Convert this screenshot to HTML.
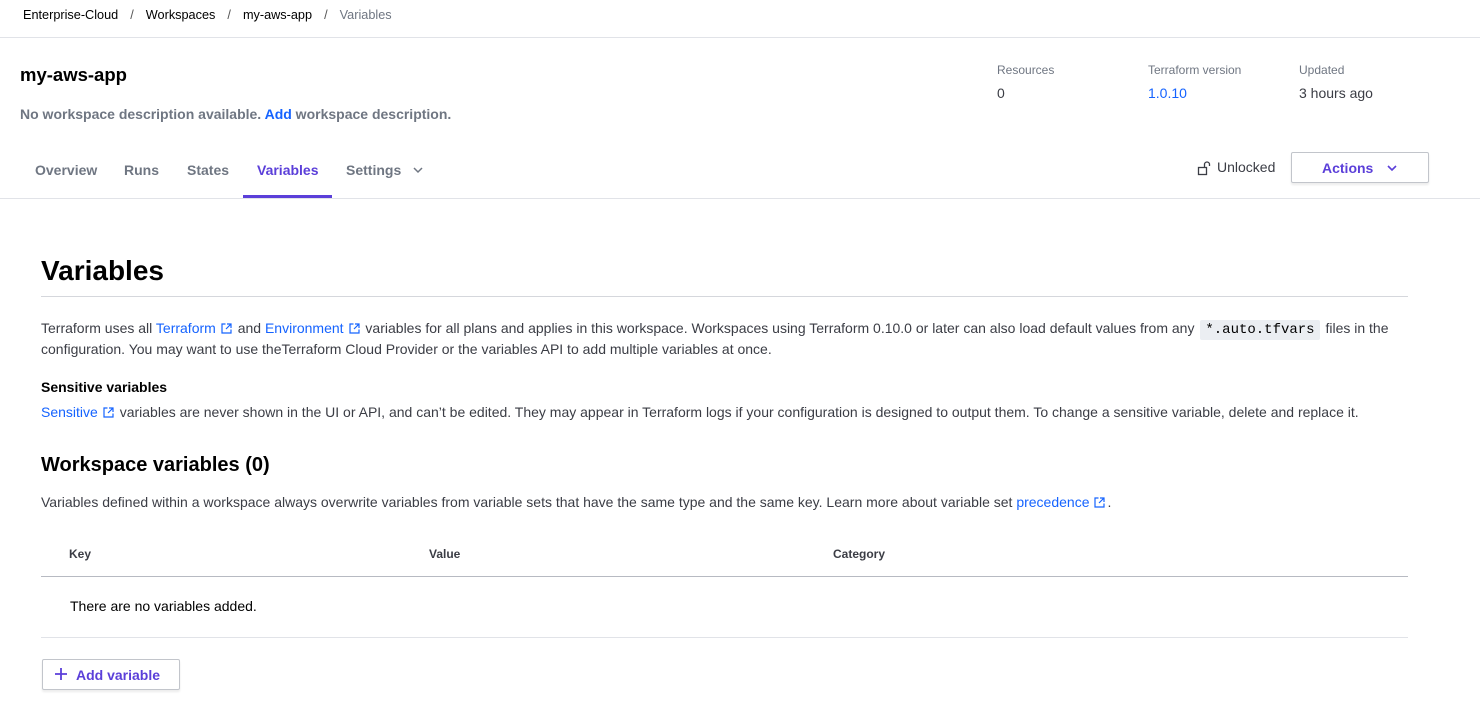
<!DOCTYPE html>
<html><head><meta charset="utf-8"><style>
*{margin:0;padding:0;box-sizing:border-box}
body{width:1480px;height:721px;background:#fff;font-family:"Liberation Sans",Arial,sans-serif;color:#1f2024;position:relative;overflow:hidden}
.a{position:absolute;white-space:nowrap}
.blue{color:#1563ff}
.ext{display:inline-block;vertical-align:-1px;margin-left:5px;margin-right:2px}
.gray{color:#3b3d45}
</style></head><body>
<div class="a" style="left:23px;top:8px;font-size:12.7px;color:#000">Enterprise-Cloud <span style="margin:0 8.5px;color:#555">/</span> Workspaces <span style="margin:0 8.5px;color:#555">/</span> my-aws-app <span style="margin:0 8.5px;color:#555">/</span> <span style="color:#6f7682">Variables</span></div>
<div class="a" style="left:0;top:37px;width:1480px;height:1px;background:#e1e3e8"></div>

<div class="a" style="left:20px;top:64px;font-size:18.5px;font-weight:bold;color:#000">my-aws-app</div>
<div class="a" style="left:20px;top:106px;font-size:14px;font-weight:bold;color:#6f7682">No workspace description available. <span class="blue">Add</span> workspace description.</div>

<div class="a" style="left:997px;top:63px;font-size:12px;color:#6f7682">Resources</div>
<div class="a" style="left:997px;top:85px;font-size:14px;color:#3b3d45">0</div>
<div class="a" style="left:1148px;top:63px;font-size:12px;color:#6f7682">Terraform version</div>
<div class="a" style="left:1148px;top:85px;font-size:14px" ><span class="blue">1.0.10</span></div>
<div class="a" style="left:1299px;top:63px;font-size:12px;color:#6f7682">Updated</div>
<div class="a" style="left:1299px;top:85px;font-size:14px;color:#3b3d45">3 hours ago</div>

<div class="a" style="left:35px;top:162px;font-size:14px;font-weight:bold;color:#6f7682">Overview</div>
<div class="a" style="left:124px;top:162px;font-size:14px;font-weight:bold;color:#6f7682">Runs</div>
<div class="a" style="left:187px;top:162px;font-size:14px;font-weight:bold;color:#6f7682">States</div>
<div class="a" style="left:257px;top:162px;font-size:14px;font-weight:bold;color:#5b3fd9">Variables</div>
<div class="a" style="left:243px;top:195px;width:89px;height:3px;background:#5b3fd9"></div>
<div class="a" style="left:346px;top:162px;font-size:14px;font-weight:bold;color:#6f7682">Settings</div>
<svg class="a" style="left:412px;top:164px" width="12" height="12" viewBox="0 0 12 12"><path d="M2 4l4 4 4-4" fill="none" stroke="#6f7682" stroke-width="1.5"/></svg>
<div class="a" style="left:0;top:198px;width:1480px;height:1px;background:#e1e3e8"></div>

<svg class="a" style="left:1197px;top:160px" width="16" height="16" viewBox="0 0 16 16"><rect x="1.5" y="7.5" width="8" height="7" fill="none" stroke="#3b3d45" stroke-width="1.3"/><path d="M7.5 7.5V4.5a2.5 2.5 0 015 0V6" fill="none" stroke="#3b3d45" stroke-width="1.3"/></svg>
<div class="a" style="left:1217px;top:159px;font-size:14px;color:#3b3d45">Unlocked</div>
<div class="a" style="left:1291px;top:152px;width:138px;height:31px;border:1px solid #c2c5cb;border-radius:2px;box-shadow:0 2px 2px rgba(0,0,0,.08)"></div>
<div class="a" style="left:1322px;top:160px;font-size:14px;font-weight:bold;color:#5b3fd9">Actions</div>
<svg class="a" style="left:1386px;top:162px" width="12" height="12" viewBox="0 0 12 12"><path d="M2 4l4 4 4-4" fill="none" stroke="#5b3fd9" stroke-width="1.6"/></svg>

<div class="a" style="left:41px;top:255px;font-size:28px;font-weight:bold;color:#000">Variables</div>
<div class="a" style="left:41px;top:296px;width:1367px;height:1px;background:#d5d7dc"></div>

<div class="a gray" style="left:41px;top:320px;font-size:14px">Terraform uses all <span class="blue">Terraform<svg class="ext" width="11" height="11" viewBox="0 0 11 11"><path d="M4.5 1H1v9h9V6.5M6 1h4v4M10 1L5 6" fill="none" stroke="#1563ff" stroke-width="1.2"/></svg></span> and <span class="blue">Environment<svg class="ext" width="11" height="11" viewBox="0 0 11 11"><path d="M4.5 1H1v9h9V6.5M6 1h4v4M10 1L5 6" fill="none" stroke="#1563ff" stroke-width="1.2"/></svg></span> variables for all plans and applies in this workspace. Workspaces using Terraform 0.10.0 or later can also load default values from any <span style="background:#ebeef2;font-family:'Liberation Mono',monospace;color:#000;padding:2px 5px;border-radius:2px;margin-left:2px;margin-right:2px">*.auto.tfvars</span> files in the</div>
<div class="a gray" style="left:41px;top:341px;font-size:14px">configuration. You may want to use theTerraform Cloud Provider or the variables API to add multiple variables at once.</div>
<div class="a" style="left:41px;top:379px;font-size:14px;font-weight:bold;color:#000">Sensitive variables</div>
<div class="a gray" style="left:41px;top:404px;font-size:14px"><span class="blue">Sensitive<svg class="ext" width="11" height="11" viewBox="0 0 11 11"><path d="M4.5 1H1v9h9V6.5M6 1h4v4M10 1L5 6" fill="none" stroke="#1563ff" stroke-width="1.2"/></svg></span> variables are never shown in the UI or API, and can’t be edited. They may appear in Terraform logs if your configuration is designed to output them. To change a sensitive variable, delete and replace it.</div>

<div class="a" style="left:41px;top:454px;font-size:20px;font-weight:bold;color:#000">Workspace variables (0)</div>
<div class="a gray" style="left:41px;top:494px;font-size:14px">Variables defined within a workspace always overwrite variables from variable sets that have the same type and the same key. Learn more about variable set <span class="blue">precedence<svg class="ext" width="11" height="11" viewBox="0 0 11 11"><path d="M4.5 1H1v9h9V6.5M6 1h4v4M10 1L5 6" fill="none" stroke="#1563ff" stroke-width="1.2"/></svg></span>.</div>

<div class="a" style="left:69px;top:547px;font-size:12px;font-weight:bold;color:#3b3d45">Key</div>
<div class="a" style="left:429px;top:547px;font-size:12px;font-weight:bold;color:#3b3d45">Value</div>
<div class="a" style="left:833px;top:547px;font-size:12px;font-weight:bold;color:#3b3d45">Category</div>
<div class="a" style="left:41px;top:576px;width:1367px;height:1px;background:#b7bac2"></div>
<div class="a" style="left:70px;top:598px;font-size:14px;color:#000">There are no variables added.</div>
<div class="a" style="left:41px;top:637px;width:1367px;height:1px;background:#e1e3e8"></div>

<div class="a" style="left:42px;top:659px;width:138px;height:31px;border:1px solid #c2c5cb;border-radius:2px;box-shadow:0 2px 2px rgba(0,0,0,.08)"></div>
<svg class="a" style="left:54px;top:667px" width="14" height="14" viewBox="0 0 14 14"><path d="M7 1v12M1 7h12" stroke="#5b3fd9" stroke-width="1.8"/></svg>
<div class="a" style="left:76px;top:667px;font-size:14px;font-weight:bold;color:#5b3fd9">Add variable</div>
</body></html>
